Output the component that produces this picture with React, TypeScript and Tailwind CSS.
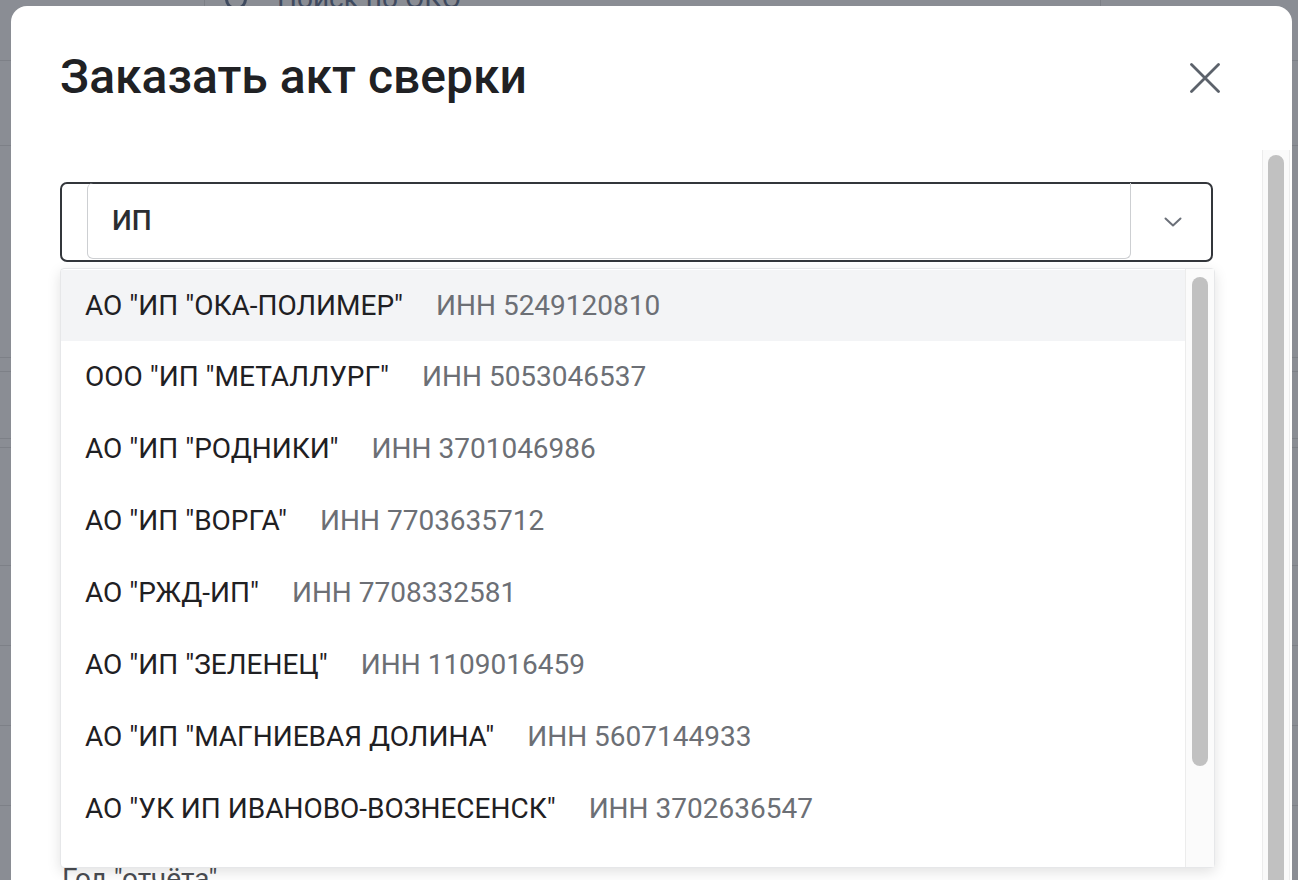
import React from "react";

const items: { name: string; inn: string }[] = [
  { name: 'АО "ИП "ОКА-ПОЛИМЕР"', inn: "ИНН 5249120810" },
  { name: 'ООО "ИП "МЕТАЛЛУРГ"', inn: "ИНН 5053046537" },
  { name: 'АО "ИП "РОДНИКИ"', inn: "ИНН 3701046986" },
  { name: 'АО "ИП "ВОРГА"', inn: "ИНН 7703635712" },
  { name: 'АО "РЖД-ИП"', inn: "ИНН 7708332581" },
  { name: 'АО "ИП "ЗЕЛЕНЕЦ"', inn: "ИНН 1109016459" },
  { name: 'АО "ИП "МАГНИЕВАЯ ДОЛИНА"', inn: "ИНН 5607144933" },
  { name: 'АО "УК ИП ИВАНОВО-ВОЗНЕСЕНСК"', inn: "ИНН 3702636547" },
];

const bgRows = [55, 85, 212, 14, 67, 9, 118, 80, 80, 80, 80];

export default function App() {
  return (
    <div
      className="relative w-[1298px] h-[880px] overflow-hidden bg-[#8a8d94]"
      style={{ fontFamily: "Roboto, 'Noto Sans', sans-serif" }}
    >
      {/* background page behind overlay */}
      <div className="flex flex-col">
        <div className="flex h-[6px] overflow-hidden">
          <div className="w-[205px] border-r border-[#7c7f86]" />
          <div className="flex-1 relative">
            <div className="flex items-center gap-[30px] pl-[20px] -mt-[22px] text-[28px] text-[#3f4a5f]">
              <span className="inline-block w-[22px] h-[22px] rounded-full border-[3px] border-[#3f4a5f]" />
              <span>Поиск по ОКО</span>
            </div>
          </div>
          <div className="w-[198px] border-l border-[#7c7f86]" />
        </div>
        {bgRows.map((h, i) => (
          <div key={i} className="border-b border-[#7d8087]" style={{ height: h }} />
        ))}
      </div>

      {/* modal */}
      <div className="absolute left-[11px] top-[6px] w-[1281px] h-[900px] bg-white rounded-t-[16px] flex flex-col">
        {/* header */}
        <div className="flex justify-between pl-[49px] pr-[72px] pt-[42px] h-[144px] shrink-0 items-start">
          <h2 className="text-[48px] leading-[58px] font-medium text-[#202124]">
            Заказать акт сверки
          </h2>
          <button className="w-[30px] h-[30px] mt-[15px] flex items-center justify-center">
            <svg width="30" height="30" viewBox="0 0 30 30" fill="none">
              <path d="M1.5 1.5 L28.5 28.5 M28.5 1.5 L1.5 28.5" stroke="#5c626b" strokeWidth="2.8" strokeLinecap="round" />
            </svg>
          </button>
        </div>

        {/* body */}
        <div className="flex flex-1 min-h-0">
          <div className="flex-1 pl-[49px] pr-[49px] pt-[32px] relative">
            {/* combobox */}
            <div className="relative">
              <div className="flex h-[80px] border-2 border-[#33363b] rounded-[7px]">
                <div className="ml-[25px] flex-1 flex items-center border-l border-r border-b border-[#cdcfd2] rounded-b-[6px] rounded-tl-[6px] pl-[24px] -mt-[1px] mb-[1px]">
                  <span className="text-[28px] font-medium text-[#2b2d31]">ИП</span>
                </div>
                <div className="w-[80px] flex items-center justify-center pl-[4px]">
                  <svg width="18" height="10" viewBox="0 0 18 10" fill="none">
                    <path d="M1.5 1.5 L9 8.5 L16.5 1.5" stroke="#6b7079" strokeWidth="2" strokeLinecap="round" strokeLinejoin="round" />
                  </svg>
                </div>
              </div>

              {/* dropdown */}
              <div className="absolute left-0 top-[86px] w-[1155px] h-[600px] bg-white border border-[#e6e7e9] rounded-[4px] shadow-[0_4px_14px_rgba(0,0,0,0.12)] flex z-10">
                <div className="flex-1 flex flex-col pt-[1px]">
                  {items.map((it, i) => (
                    <div
                      key={i}
                      className={
                        "shrink-0 flex items-center pl-[24px] gap-[33px] text-[28px] " +
                        (i === 0 ? "bg-[#f3f4f6] h-[71px]" : "h-[72px]")
                      }
                    >
                      <span className="text-[#1f2023]">{it.name}</span>
                      <span className="text-[#6c6f75]">{it.inn}</span>
                    </div>
                  ))}
                </div>
                <div className="w-[29px] border-l border-[#ececec] bg-[#fbfbfb] flex justify-center pt-[8px]">
                  <div className="w-[16px] h-[489px] rounded-full bg-[#c1c1c1]" />
                </div>
              </div>
            </div>

            {/* content below, mostly hidden by dropdown */}
            <div className="mt-[596px] pl-[2px] text-[28px] text-[#4a4d52]">Год &quot;отчёта&quot;</div>
          </div>

          {/* modal scrollbar */}
          <div className="w-[28px] mr-[2px] border-l border-r border-[#ececec] bg-[#fafafa] flex justify-center pt-[5px]">
            <div className="w-[16px] h-[900px] rounded-t-full bg-[#c1c1c1]" />
          </div>
        </div>
      </div>
    </div>
  );
}
